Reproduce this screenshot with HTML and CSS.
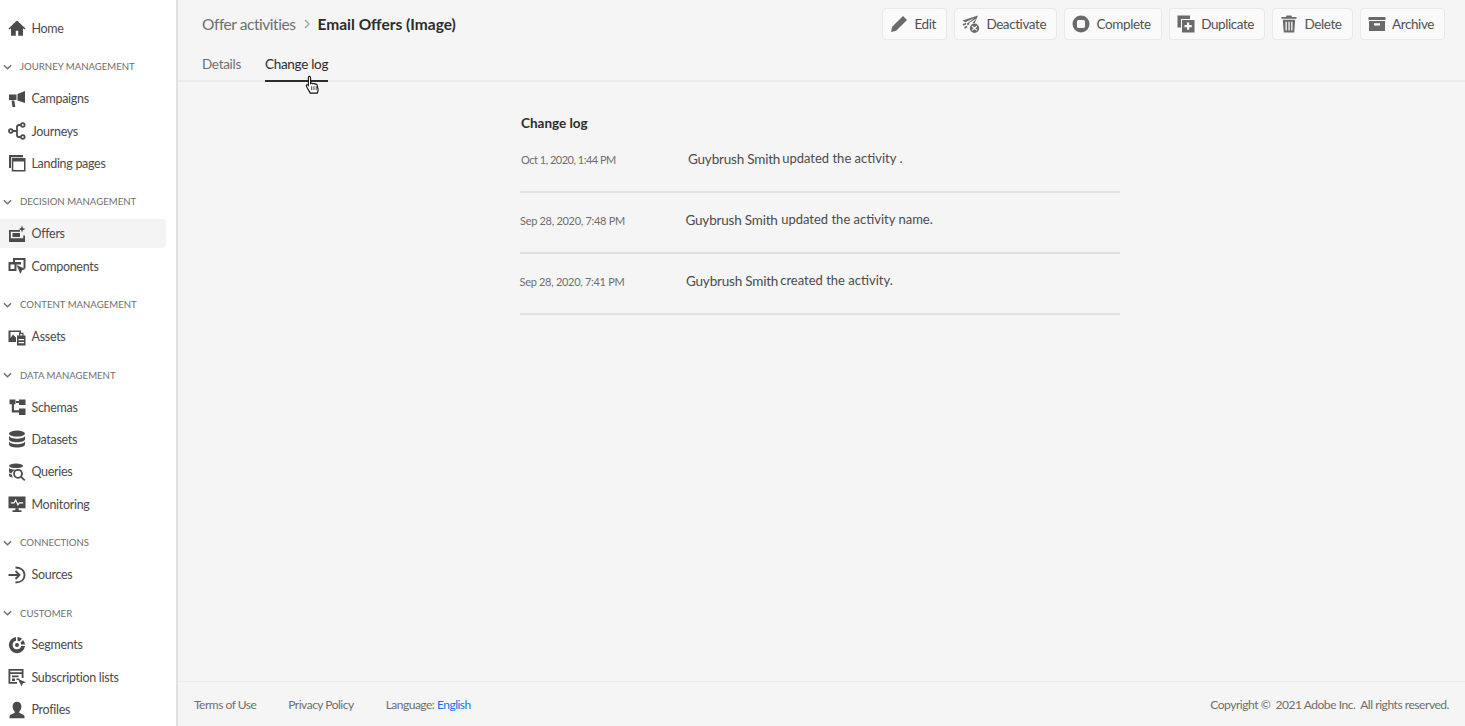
FILE: index.html
```html
<!DOCTYPE html>
<html lang="en">
<head>
  <meta charset="UTF-8">
  <title>Email Offers (Image) - Change log</title>
  <link rel="stylesheet" href="styles.css">
</head>
<body>

  <!-- SIDEBAR -->
  <aside class="sidebar">
    <a class="item home"><svg class="icon" viewBox="0 0 18 18"><path d="M9 1.500 .5 9.500l1 1.100L3 9.300V16.800h4.800v-5h2.400v5H15V9.300l1.500 1.300 1-1.100z"/></svg>Home</a>

    <div class="section"><svg class="chev" viewBox="0 0 10 6"><path d="M1 1l4 4 4-4"/></svg>Journey Management</div>
    <a class="item"><svg class="icon" viewBox="0 0 18 18"><path d="M17 1v12L9.500 10.500V4zM1 4.500h7.500v5.500H1zM3.500 10.500h2.800l1 6.500H4.500z"/></svg>Campaigns</a>
    <a class="item"><svg class="icon" viewBox="0 0 18 18"><path class="line" d="M4 9h5M9 9V5c0-1.500.7-2 2-2h1.500M9 9v4c0 1.500.7 2 2 2h1.500"/><circle class="line" cx="2.800" cy="9" r="1.800"/><circle class="line" cx="14.800" cy="3" r="1.800"/><circle class="line" cx="14.800" cy="15" r="1.800"/></svg>Journeys</a>
    <a class="item"><svg class="icon" viewBox="0 0 18 18"><path d="M1 1h14v2.200H3V14H1z"/><path fill-rule="evenodd" d="M3.800 4H17.500v13.500H3.800zM5.300 7.500v8.500h10.700V7.500z"/></svg>Landing pages</a>

    <div class="section"><svg class="chev" viewBox="0 0 10 6"><path d="M1 1l4 4 4-4"/></svg>Decision Management</div>
    <a class="item active"><svg class="icon" viewBox="0 0 18 18"><path fill-rule="evenodd" d="M1 5h11v1.800h-9.200v6.700h12.400v-3h1.800V16H1zM4.500 8H12v4H4.500z"/><path d="M14 .5l.9 2.600 2.600.9-2.600.9L14 7.500l-.9-2.600-2.600-.9 2.600-.9z"/><path d="M1 13.500h16V17H1z"/></svg>Offers</a>
    <a class="item"><svg class="icon" viewBox="0 0 18 18"><path d="M5 1h12.500v10.500h-2V3H7v2H5z"/><path fill-rule="evenodd" d="M.5 5H13v2.500H8.500V14H.5zm2 2.500V12h4V7.500z"/><path d="M8.500 8l9 4-3.500 1.300L12.500 17z"/></svg>Components</a>

    <div class="section"><svg class="chev" viewBox="0 0 10 6"><path d="M1 1l4 4 4-4"/></svg>Content Management</div>
    <a class="item"><svg class="icon" viewBox="0 0 18 18"><path fill-rule="evenodd" d="M.5 2.500H13V5h-1.500V4H2.500v6L5 6.500l3 3V14H.5z"/><path fill-rule="evenodd" d="M9 7.500h8.500v10H9zM11 4.800h4.500v2.700h-1.200V6h-2.100v1.500H11zM10.500 11v1.200h5.500V11zM10.500 14v1.200h5.500V14z"/></svg>Assets</a>

    <div class="section"><svg class="chev" viewBox="0 0 10 6"><path d="M1 1l4 4 4-4"/></svg>Data Management</div>
    <a class="item"><svg class="icon" viewBox="0 0 18 18"><path d="M1.500 1.500h6v4.800H6v6h5V10.500h6.500v6.500H11v-2.500H3.800V6.300H1.500zM11 1.500h6.500v5.500H11V5H8V3h3z"/></svg>Schemas</a>
    <a class="item"><svg class="icon" viewBox="0 0 18 18"><ellipse cx="9" cy="3.600" rx="8" ry="3"/><path d="M1 6c1 1.800 4.200 2.700 8 2.700S16 7.800 17 6v3.200c0 1.700-3.600 3-8 3s-8-1.300-8-3z"/><path d="M1 11.500c1 1.800 4.200 2.700 8 2.700s7-.9 8-2.700v2.900c0 1.700-3.600 3-8 3s-8-1.300-8-3z"/></svg>Datasets</a>
    <a class="item"><svg class="icon" viewBox="0 0 18 18"><ellipse cx="8" cy="2.800" rx="7" ry="2.300"/><path d="M1 5c1 1 3.500 1.700 6.500 1.700-2 .8-3.400 2-3.900 3.700C2.100 10 1 9.300 1 8.400zM1 10.500c.7.500 1.800.9 2.700 1.100.1 1 .6 2.100 1.300 3-2.300-.3-4-1.100-4-2.100z"/><circle class="line" cx="10" cy="10.800" r="4"/><path class="line" stroke-width="2.200" d="M13 13.800l3.800 3.500"/></svg>Queries</a>
    <a class="item"><svg class="icon" viewBox="0 0 18 18"><path fill-rule="evenodd" d="M.5 1.500h17v11.800H.5zM2.800 7.200v1.200h3.600l1.200-2.200 2.200 4.900 1.800-2.700h3.600V7.200H11l-1 1.600L7.800 3.800 5.600 7.200z"/><path d="M7.300 13.300h3.400v2h2.800V17h-9v-1.700h2.800z"/></svg>Monitoring</a>

    <div class="section"><svg class="chev" viewBox="0 0 10 6"><path d="M1 1l4 4 4-4"/></svg>Connections</div>
    <a class="item"><svg class="icon" viewBox="0 0 18 18"><path class="line" d="M.5 9h11M7.500 5L11.500 9l-4 4"/><path class="line" d="M7.500 1.500c5 0 9 2.700 9 7.500s-4 7.500-9 7.500"/></svg>Sources</a>

    <div class="section"><svg class="chev" viewBox="0 0 10 6"><path d="M1 1l4 4 4-4"/></svg>Customer</div>
    <a class="item"><svg class="icon" viewBox="0 0 18 18"><path d="M8 1v3.800A4.300 4.300 0 1 0 13.100 10H17A8.100 8.100 0 1 1 8 1zM9.500 1a8 8 0 0 1 4.500 1.800L11.400 5.500a4.300 4.300 0 0 0-1.900-.8z"/><circle cx="9" cy="9" r="2"/><path d="M15 4a8 8 0 0 1 2 4.500h-3.900a4.300 4.300 0 0 0-.7-1.700z"/></svg>Segments</a>
    <a class="item"><svg class="icon" viewBox="0 0 18 18"><path fill-rule="evenodd" d="M.5 1h15v9h-1.800V6H2.300v8H9v1.800H.5zM2.300 2.800v1.400h11.400V2.800z"/><path d="M4 7.500h6.500v1.700H4zM4 10.500h3V13H4zM8.500 10.500h3V12h-3zM10 11l8 3.200-3.200 1.100-1.300 3z"/></svg>Subscription lists</a>
    <a class="item"><svg class="icon" viewBox="0 0 18 18"><path d="M9 .8c2.600 0 4.400 2 4.400 4.800 0 2.200-.9 3.900-2 5-.4.500-.3 1.200.3 1.500 2 .9 4.300 1.800 4.800 2.900v2.300H1.500V15c.5-1.100 2.800-2 4.800-2.900.6-.3.7-1 .3-1.500-1.100-1.100-2-2.800-2-5C4.600 2.800 6.400.8 9 .8z"/></svg>Profiles</a>
  </aside>

  <main class="main">
    <!-- HEADER -->
    <header class="top">
      <div class="crumbs">
        <span class="crumb">Offer activities</span>
        <svg class="crumb-sep" viewBox="0 0 6 10"><path d="M1 1l4 4-4 4"/></svg>
        <strong class="crumb-now">Email Offers (Image)</strong>
      </div>
      <div class="actions">
        <button class="btn"><svg class="icon" viewBox="0 0 18 18"><path d="M13 1l4 4L6.200 15.800 1 17l1.200-5.200z"/></svg>Edit</button>
        <button class="btn"><svg class="icon" viewBox="0 0 18 18"><path d="M16 .5L.5 5.500l2.700 1.800L12.500 3 5 8.500l.5 2 2-1.200-.5-1.300L14.500 3.500 10.500 8l2 .5z"/><path d="M1 10l3-1.500M2.500 13l2.500-1.500" class="line"/><path fill-rule="evenodd" d="M12.500 8.500a4.700 4.700 0 1 1 0 9.400 4.700 4.700 0 0 1 0-9.400zm-2 2.200l-.9.900 2 1.600-2 1.700.9.900 2-1.700 2 1.700.9-.9-2-1.700 2-1.600-.9-.9-2 1.600z"/></svg>Deactivate</button>
        <button class="btn"><svg class="icon" viewBox="0 0 18 18"><path fill-rule="evenodd" d="M9 .5a8.500 8.500 0 1 1 0 17A8.500 8.500 0 0 1 9 .5zM6.500 5A1.500 1.500 0 0 0 5 6.500v5A1.500 1.500 0 0 0 6.500 13h5a1.500 1.500 0 0 0 1.500-1.500v-5A1.500 1.500 0 0 0 11.500 5z"/></svg>Complete</button>
        <button class="btn"><svg class="icon" viewBox="0 0 18 18"><path d="M.5.500h12.500V4H4v8.500H.5z"/><path fill-rule="evenodd" d="M5 5h12.500v12.500H5zm5 2.500V10H7.500v2.200H10v2.500h2.200v-2.500h2.600V10h-2.600V7.500z"/></svg>Duplicate</button>
        <button class="btn"><svg class="icon" viewBox="0 0 18 18"><path fill-rule="evenodd" d="M6.500 .5h5l.5 1.500h4.500v1.800h-15V2H6zM2.800 4.800h12.400l-1 12.700H3.800zm2.700 2v8.700h1.300V6.800zm2.900 0v8.700h1.300V6.800zm2.800 0v8.700h1.300V6.800z"/></svg>Delete</button>
        <button class="btn"><svg class="icon" viewBox="0 0 18 18"><path d="M.5 2h17v3H.5z"/><path fill-rule="evenodd" d="M1 6h16v10H1zM6 8.200v2.300h6V8.200z"/></svg>Archive</button>
      </div>
    </header>

    <nav class="tabs">
      <a class="tab">Details</a>
      <a class="tab selected">Change log</a>
    </nav>

    <!-- CHANGE LOG -->
    <section class="log">
      <h2 class="log-title">Change log</h2>
      <div class="row row-a">
        <span class="when">Oct 1, 2020, 1:44 PM</span>
        <span class="who">Guybrush Smith</span>
        <span class="what">updated the activity .</span>
      </div>
      <div class="row row-b">
        <span class="when">Sep 28, 2020, 7:48 PM</span>
        <span class="who">Guybrush Smith</span>
        <span class="what">updated the activity name.</span>
      </div>
      <div class="row row-c">
        <span class="when">Sep 28, 2020, 7:41 PM</span>
        <span class="who">Guybrush Smith</span>
        <span class="what">created the activity.</span>
      </div>
    </section>

    <footer class="foot">
      <a>Terms of Use</a>
      <a>Privacy Policy</a>
      <span>Language: <a class="lang">English</a></span>
      <span class="copy">Copyright &copy;&nbsp; 2021 Adobe Inc.&nbsp; All rights reserved.</span>
    </footer>
  </main>

  <!-- mouse pointer caught in the screenshot -->
  <svg class="pointer" viewBox="0 0 13 17"><path d="M3.500 1.200c.8 0 1.300.6 1.300 1.400v5c.4-.4 1.600-.4 2 .2.600-.4 1.600-.2 2 .4.600-.3 1.600 0 1.800.7l.9 4c.2 1-.1 2-.7 3.300H4.500L1 10c-.5-.8.500-1.800 1.500-1l.3.300V2.600c0-.8 0-1.400.7-1.400z"/><path class="finger" d="M5.800 10v3.500M7.800 10v3.500M9.800 10v3.500"/></svg>

</body>
</html>
```

FILE: styles.css
```css
body {
  margin: 0;
  height: 726px;
  display: flex;
  overflow: hidden;
  font-family: Lato, sans-serif;
  font-size: 13px;
  color: #4b4b4b;
  background: #f5f5f5;
}

/* Sidebar */
.sidebar {
  width: 176px;
  flex: none;
  background: #fff;
  border-right: 2px solid #e1e1e1;
  padding-top: 13.8px;
}

.item {
  display: flex;
  align-items: center;
  gap: 5.5px;
  width: 158px;
  height: 29px;
  margin-bottom: 3.3px;
  padding-left: 8px;
  border-radius: 0 4px 4px 0;
  font-size: 12.5px;
  letter-spacing: -.3px;
  color: #4b4b4b;
}

.item.active {
  background: #f4f4f4;
}

.icon {
  width: 18px;
  height: 18px;
  flex: none;
  fill: #4b4b4b;
}

.icon .line {
  fill: none;
  stroke: #4b4b4b;
  stroke-width: 1.8;
}

.section {
  display: flex;
  align-items: center;
  gap: 8px;
  height: 20px;
  padding: 10.8px 0 0 3px;
  margin-bottom: 7.4px;
  font-size: 9.6px;
  text-transform: uppercase;
  color: #6e6e6e;
}

.chev {
  width: 9px;
  height: 6px;
  flex: none;
  fill: none;
  stroke: #6e6e6e;
  stroke-width: 1.6;
}

/* Main */
.main {
  flex: 1;
  display: flex;
  flex-direction: column;
  min-width: 0;
}

.top {
  display: flex;
  justify-content: space-between;
  align-items: center;
  height: 32px;
  padding: 8px 20px 0 24px;
}

.crumbs {
  display: flex;
  align-items: center;
  font-size: 15.5px;
}

.crumb {
  letter-spacing: -.45px;
  color: #6e6e6e;
}

.crumb-sep {
  width: 6px;
  height: 10px;
  margin: 0 8px;
  fill: none;
  stroke: #a0a0a0;
  stroke-width: 1.2;
}

.crumb-now {
  font-weight: 700;
  color: #2c2c2c;
}

.actions {
  display: flex;
  gap: 7px;
}

.btn {
  display: flex;
  align-items: center;
  gap: 6.5px;
  height: 32px;
  padding: 0 10px 0 7px;
  background: #fafafa;
  border: 1px solid #e8e8e8;
  border-radius: 4px;
  font-family: inherit;
  font-size: 13.5px;
  letter-spacing: -.42px;
  color: #505050;
}

.btn .icon {
  fill: #6a6a6a;
}

.btn .icon .line {
  stroke: #6a6a6a;
}

.tabs {
  display: flex;
  gap: 24px;
  height: 42px;
  padding-left: 24px;
  border-bottom: 2px solid #ebebeb;
  box-sizing: border-box;
}

.tab {
  display: block;
  height: 42px;
  box-sizing: border-box;
  padding-top: 16px;
  font-size: 13.5px;
  letter-spacing: -.3px;
  color: #6e6e6e;
}

.tab.selected {
  color: #2c2c2c;
  border-bottom: 2px solid #2c2c2c;
}

/* Change log */
.log {
  flex: 1;
  width: 600px;
  margin-left: 342px;
  padding-top: 32px;
  box-sizing: border-box;
}

.log-title {
  margin: 0 0 0 1px;
  font-size: 13.5px;
  line-height: 18px;
  font-weight: 700;
  color: #2c2c2c;
}

.row {
  display: flex;
  align-items: center;
  height: 61px;
  padding-bottom: 6px;
  border-bottom: 2px solid #e1e1e1;
  box-sizing: border-box;
  color: #4b4b4b;
}

.when {
  width: 166px;
  flex: none;
  margin-top: 2px;
  font-size: 11px;
  letter-spacing: -.3px;
  color: #6e6e6e;
}

.who {
  font-size: 13.5px;
  letter-spacing: -.2px;
}

.what {
  margin: 0 0 2px 2px;
  font-size: 13px;
}

/* the rows in the reference do not line up exactly */
.row-a .when {
  padding-left: 1px;
  box-sizing: border-box;
  letter-spacing: -.5px;
}

.row-a .who {
  margin-left: 2px;
}

.row-b .who {
  margin-left: -.5px;
}

.row-b .what {
  margin-left: 3.5px;
}

.row-c .when {
  margin-left: -.5px;
  width: 166.5px;
}

.foot {
  display: flex;
  align-items: center;
  gap: 32px;
  height: 45px;
  padding: 1px 16px 0;
  border-top: 1px solid #ececec;
  box-sizing: border-box;
  font-size: 12px;
  letter-spacing: -.5px;
  color: #6e6e6e;
}

.lang {
  color: #1473e6;
}

.copy {
  margin-left: auto;
  letter-spacing: -.45px;
}

.pointer {
  position: absolute;
  left: 305px;
  top: 75px;
  width: 15px;
  height: 19px;
  fill: #fff;
  stroke: #111;
  stroke-width: 1;
}

.pointer .finger {
  fill: none;
  stroke-width: .7;
}
```
